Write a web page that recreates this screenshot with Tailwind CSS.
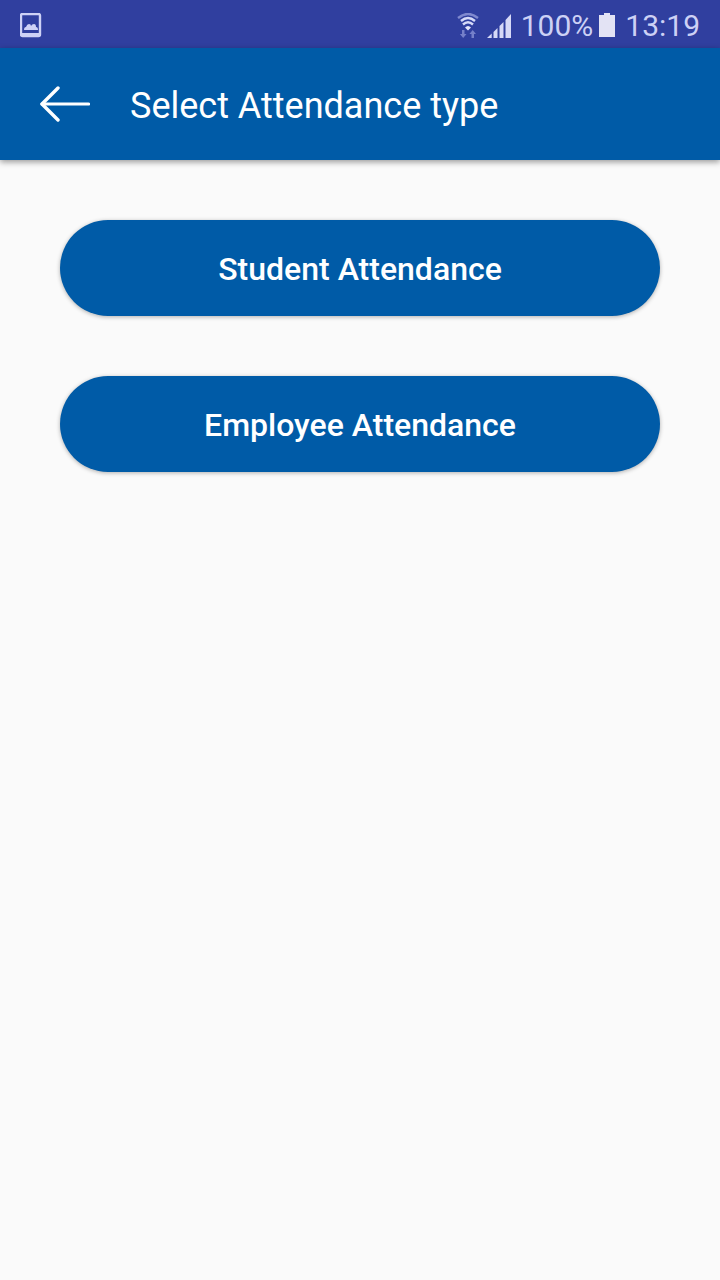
<!DOCTYPE html>
<html lang="en">
  <head>
    <meta charset="UTF-8" />
    <meta name="viewport" content="width=device-width, initial-scale=1.0" />
    <title>Select Attendance type</title>
    <script src="https://cdn.jsdelivr.net/npm/@tailwindcss/browser@4"></script>
  </head>

  <body class="bg-[#fafafa] min-h-screen font-['Roboto',sans-serif]">
    <!-- Status bar -->
    <div
      class="flex h-12 items-center justify-between bg-[#303f9f] px-5 pt-1 text-[30px] leading-9 text-[#cdd1f5]"
    >
      <svg class="h-[26px] w-[22px]" viewBox="0 0 22 26" fill="none">
        <rect x="1" y="1" width="19" height="22" rx="1.5" stroke="#ced2f6" stroke-width="2.4" />
        <path d="M1 20h19v3H1z" fill="#ced2f6" />
        <path
          d="M4 17q0-3 2-3 1-3 3-3 2 0 2 2 1-2 3-2 2 0 2 3 2 0 2 3z"
          fill="#ced2f6"
        />
      </svg>

      <div class="flex items-center">
        <svg class="mr-2 h-[26px] w-[22px]" viewBox="0 0 22 26" fill="none">
          <path d="M1 5Q11-3 21 5" stroke="#7f89cf" stroke-width="2.4" />
          <path d="M4 8Q11 2 18 8" stroke="#d6daf8" stroke-width="2.4" />
          <path d="M6 11.500Q11 7 16 11.500" stroke="#d6daf8" stroke-width="2.4" />
          <path d="M8 14.500Q11 11.500 14 14.500L11 17.500z" fill="#e4e6fb" />
          <path
            d="M5 17h2.500v4H9.500l-3.300 4-3.300-4H5zM14.500 25h2.500v-4h2l-3.300-4-3.300 4h2.100z"
            fill="#7580c9"
          />
        </svg>
        <svg class="mr-2.5 h-[26px] w-6" viewBox="0 0 24 26" fill="#d6d9f7">
          <path
            d="M0 25l4.700-4.500V25zM6.500 19l4-4v10h-4zM12.500 13l4-4v16h-4zM18.500 7L24 1v24h-5.500z"
          />
        </svg>
        <span>100%</span>
        <svg class="mr-2.5 ml-1.5 h-[26px] w-4" viewBox="0 0 16 26">
          <path d="M0 2h5V0h6v2h5v22H0z" fill="#e3e3f4" />
        </svg>
        <span>13:19</span>
      </div>
    </div>

    <!-- App bar -->
    <header
      class="flex h-28 items-center gap-10 bg-[#005ba7] px-10 text-white shadow-[0_2px_6px_rgba(0,0,0,0.4)]"
    >
      <button type="button" aria-label="Back">
        <svg
          class="block h-9 w-[50px]"
          viewBox="0 0 50 36"
          fill="none"
          stroke="currentColor"
          stroke-linecap="round"
          stroke-linejoin="round"
        >
          <path d="M48.500 18H2" stroke-width="3.2" />
          <path d="M18 2L2 18l16 16" stroke-width="3.4" />
        </svg>
      </button>
      <h1 class="pt-1 text-4xl">Select Attendance type</h1>
    </header>

    <main class="flex flex-col gap-15 p-15">
      <button
        type="button"
        class="h-24 rounded-full bg-[#005ba7] pt-0.5 text-[32px] font-medium text-white shadow-[0_1px_4px_rgba(0,0,0,0.3)]"
      >
        Student Attendance
      </button>
      <button
        type="button"
        class="h-24 rounded-full bg-[#005ba7] pt-0.5 text-[32px] font-medium text-white shadow-[0_1px_4px_rgba(0,0,0,0.3)]"
      >
        Employee Attendance
      </button>
    </main>
  </body>
</html>
